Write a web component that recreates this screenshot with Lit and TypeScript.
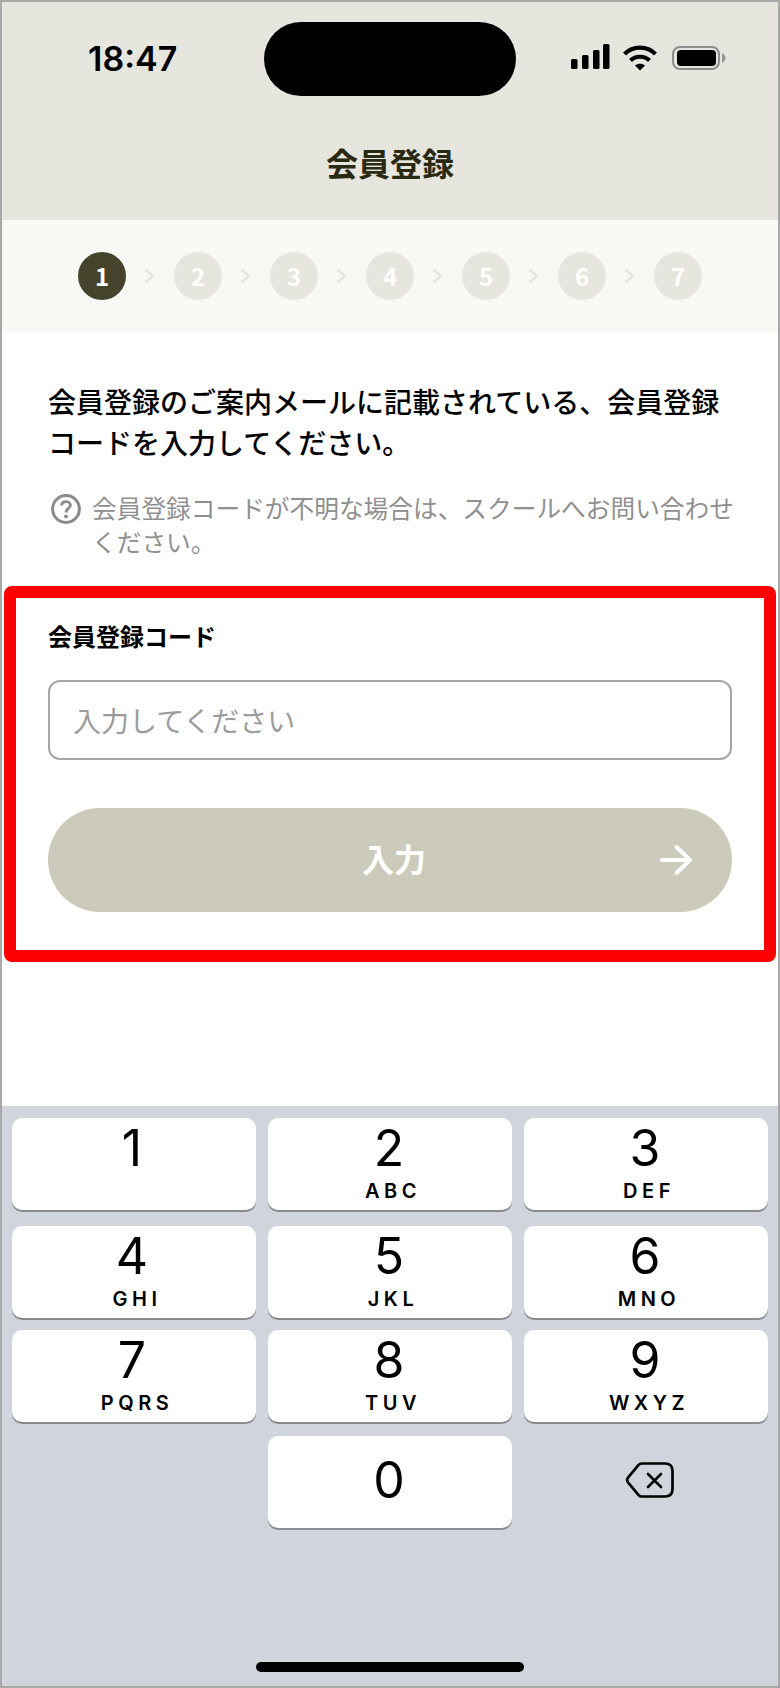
import { LitElement, html, css } from "lit";
import { customElement } from "lit/decorators.js";

const KEYS = [
  [["1", ""], ["2", "ABC"], ["3", "DEF"]],
  [["4", "GHI"], ["5", "JKL"], ["6", "MNO"]],
  [["7", "PQRS"], ["8", "TUV"], ["9", "WXYZ"]],
];

@customElement("app-root")
export class AppRoot extends LitElement {
  static styles = css`
    :host {
      display: block;
      width: 780px;
      height: 1688px;
      box-sizing: border-box;
      border: 2px solid #a8a8a8;
      background: #fff;
      font-family: "Noto Sans CJK JP", "Noto Sans", sans-serif;
      color: #000;
      overflow: hidden;
    }
    .frame {
      display: flex;
      flex-direction: column;
      height: 100%;
      position: relative;
    }
    .top {
      background: #e6e6df;
      height: 218px;
      display: flex;
      flex-direction: column;
      flex: none;
    }
    .status {
      display: grid;
      grid-template-columns: 262px 252px 1fr;
      padding-top: 20px;
      height: 74px;
    }
    .time {
      font-family: Inter, sans-serif;
      font-weight: 600;
      font-size: 34px;
      line-height: 74px;
      padding-left: 86px;
      letter-spacing: 0;
    }
    .island {
      background: #000;
      border-radius: 37px;
    }
    .icons {
      display: flex;
      align-items: flex-start;
      padding: 22px 0 0 55px;
    }
    .icons svg { display: block; }
    .title {
      margin-top: 42px;
      text-align: center;
      font-size: 32px;
      font-weight: 700;
      line-height: 48px;
      color: #2a2a12;
    }
    .stepper {
      flex: none;
      height: 112px;
      background: #f8f8f4;
      display: flex;
      justify-content: center;
      align-items: center;
    }
    .dot {
      width: 48px;
      height: 48px;
      border-radius: 50%;
      background: #e6e6df;
      color: #fff;
      font-size: 24px;
      font-weight: 700;
      line-height: 48px;
      text-align: center;
    }
    .dot.on { background: #45432c; }
    .chev {
      width: 48px;
      display: flex;
      justify-content: center;
    }
    .body {
      flex: none;
      height: 774px;
      display: flex;
      flex-direction: column;
    }
    .lead {
      margin: 49px 40px 0 46px;
      font-size: 28px;
      line-height: 41px;
      font-weight: 500;
    }
    .help {
      display: flex;
      margin: 27px 40px 0 49px;
      gap: 11px;
      color: #8f8f8f;
      font-size: 24.7px;
      line-height: 34px;
    }
    .help svg { flex: none; margin-top: 4px; }
    .help p { margin: 0; }
    .box {
      margin: 28px 2px 0 2px;
      border: 12px solid #ff0000;
      border-radius: 8px;
      height: 376px;
      box-sizing: border-box;
      padding: 20px 32px 0 32px;
    }
    .label {
      font-size: 24px;
      font-weight: 700;
      line-height: 36px;
    }
    .input {
      margin-top: 26px;
      height: 80px;
      box-sizing: border-box;
      border: 2px solid #a6a6a6;
      border-radius: 12px;
      padding-left: 23px;
      font-size: 28px;
      line-height: 76px;
      color: #9c9c9c;
    }
    .btn {
      margin-top: 48px;
      height: 104px;
      box-sizing: border-box;
      border-radius: 52px;
      background: #cccabb;
      color: #fff;
      font-size: 32px;
      font-weight: 700;
      display: flex;
      align-items: center;
      justify-content: center;
      padding: 0 0 4px 8px;
      position: relative;
    }
    .btn svg { position: absolute; right: 40px; top: 37px; }
    .kbd {
      flex: 1;
      background: #d0d4dc;
      padding: 12px 10px 0;
      display: flex;
      flex-direction: column;
      position: relative;
    }
    .row {
      display: grid;
      grid-template-columns: repeat(3, 244px);
      gap: 12px;
      height: 92px;
    }
    .row.r2 { margin-top: 16px; }
    .row.r3 { margin-top: 12px; }
    .row.r4 { margin-top: 14px; }
    .key {
      background: #fff;
      border-radius: 10px;
      box-shadow: 0 2px 0 #8a8c90;
      text-align: center;
      font-family: Inter, sans-serif;
      display: flex;
      flex-direction: column;
      align-items: center;
    }
    .num {
      font-size: 50px;
      font-weight: 380;
      line-height: 36px;
      margin-top: 12px;
      margin-right: 2px;
    }
    .key:first-child .num { margin-right: 4px; }
    .num.zero { margin-top: 26px; }
    .sub {
      font-size: 20px;
      font-weight: 600;
      letter-spacing: 4.5px;
      line-height: 20px;
      margin-top: 15px;
      padding-left: 6px;
    }
    .del {
      display: flex;
      padding-left: 101px;
    }
    .del svg { margin-top: 25px; }
    .home {
      position: absolute;
      left: 254px;
      bottom: 14px;
      width: 268px;
      height: 10px;
      border-radius: 5px;
      background: #000;
    }
  `;

  private chevron() {
    return html`<span class="chev"><svg width="12" height="16" viewBox="0 0 12 16" fill="none"><path d="M1.5 1 L8.5 8 L1.5 15" stroke="#e6e6df" stroke-width="2.6"/></svg></span>`;
  }

  private stepper() {
    const out = [];
    for (let i = 1; i <= 7; i++) {
      out.push(html`<span class="dot ${i === 1 ? "on" : ""}">${i}</span>`);
      if (i < 7) out.push(this.chevron());
    }
    return out;
  }

  render() {
    return html`
      <div class="frame">
        <div class="top">
          <div class="status">
            <div class="time">18:47</div>
            <div class="island"></div>
            <div class="icons">
              <svg width="158" height="30" viewBox="0 0 158 30">
                <g fill="#000">
                  <rect x="0" y="15" width="6.5" height="10" rx="1.5"/>
                  <rect x="11" y="11" width="6.5" height="14" rx="1.5"/>
                  <rect x="22" y="6" width="6.5" height="19" rx="1.5"/>
                  <rect x="32" y="0" width="6.5" height="25" rx="1.5"/>
                </g>
                <g fill="none" stroke="#000" stroke-width="4.2">
                  <path d="M53.5 10 C62 1.5 76 1.5 84.5 10"/>
                  <path d="M59.5 16.5 C64.5 11.5 73.5 11.5 78.5 16.5"/>
                </g>
                <path d="M64 21.5 C66.5 19 71.5 19 74 21.5 L69 26.5 Z" fill="#000"/>
                <rect x="102" y="3" width="46" height="22" rx="7" fill="none" stroke="#8c8c8c" stroke-width="2"/>
                <rect x="106" y="6" width="39" height="16" rx="4" fill="#000"/>
                <path d="M151 9 C153.5 10 154.5 12 154.5 14 C154.5 16 153.5 18 151 19 Z" fill="#9a9a9a"/>
              </svg>
            </div>
          </div>
          <div class="title">会員登録</div>
        </div>
        <div class="stepper">${this.stepper()}</div>
        <div class="body">
          <div class="lead">会員登録のご案内メールに記載されている、会員登録コードを入力してください。</div>
          <div class="help">
            <svg width="30" height="30" viewBox="0 0 30 30" fill="none">
              <circle cx="15" cy="15" r="13.4" stroke="#8a8a8a" stroke-width="3"/>
              <path d="M10.6 11.6 C10.6 9 12.6 7.6 15 7.6 C17.4 7.6 19.4 9.1 19.4 11.3 C19.4 14.2 15 14.6 15 18.4" stroke="#8a8a8a" stroke-width="2.8"/>
              <circle cx="15" cy="22.4" r="1.9" fill="#8a8a8a"/>
            </svg>
            <p>会員登録コードが不明な場合は、スクールへお問い合わせください。</p>
          </div>
          <div class="box">
            <div class="label">会員登録コード</div>
            <div class="input">入力してください</div>
            <div class="btn">入力
              <svg width="32" height="30" viewBox="0 0 32 30" fill="none" stroke-linecap="round" stroke-linejoin="round">
                <path d="M2 15 H30 M16.5 2 L30 15 L16.5 28" stroke="#fff" stroke-width="4"/>
              </svg>
            </div>
          </div>
        </div>
        <div class="kbd">
          ${KEYS.map(
            (row, i) => html`<div class="row r${i + 1}">
              ${row.map(
                ([n, s]) => html`<div class="key"><span class="num">${n}</span><span class="sub">${s}</span></div>`
              )}
            </div>`
          )}
          <div class="row r4">
            <div></div>
            <div class="key"><span class="num zero">0</span></div>
            <div class="del">
              <svg width="50" height="38" viewBox="0 0 50 38" fill="none" stroke="#000" stroke-linecap="round">
                <path d="M17 2.5 H40 C45 2.5 47.5 5 47.5 10 V28 C47.5 33 45 35.5 40 35.5 H17 C15.4 35.5 14.4 35 13.4 33.8 L3 21.4 C2 20 2 18 3 16.6 L13.4 4.2 C14.4 3 15.4 2.5 17 2.5 Z" stroke-width="2.7"/>
                <path d="M23 13 L36 26 M36 13 L23 26" stroke-width="2.6"/>
              </svg>
            </div>
          </div>
          <div class="home"></div>
        </div>
      </div>
    `;
  }
}
